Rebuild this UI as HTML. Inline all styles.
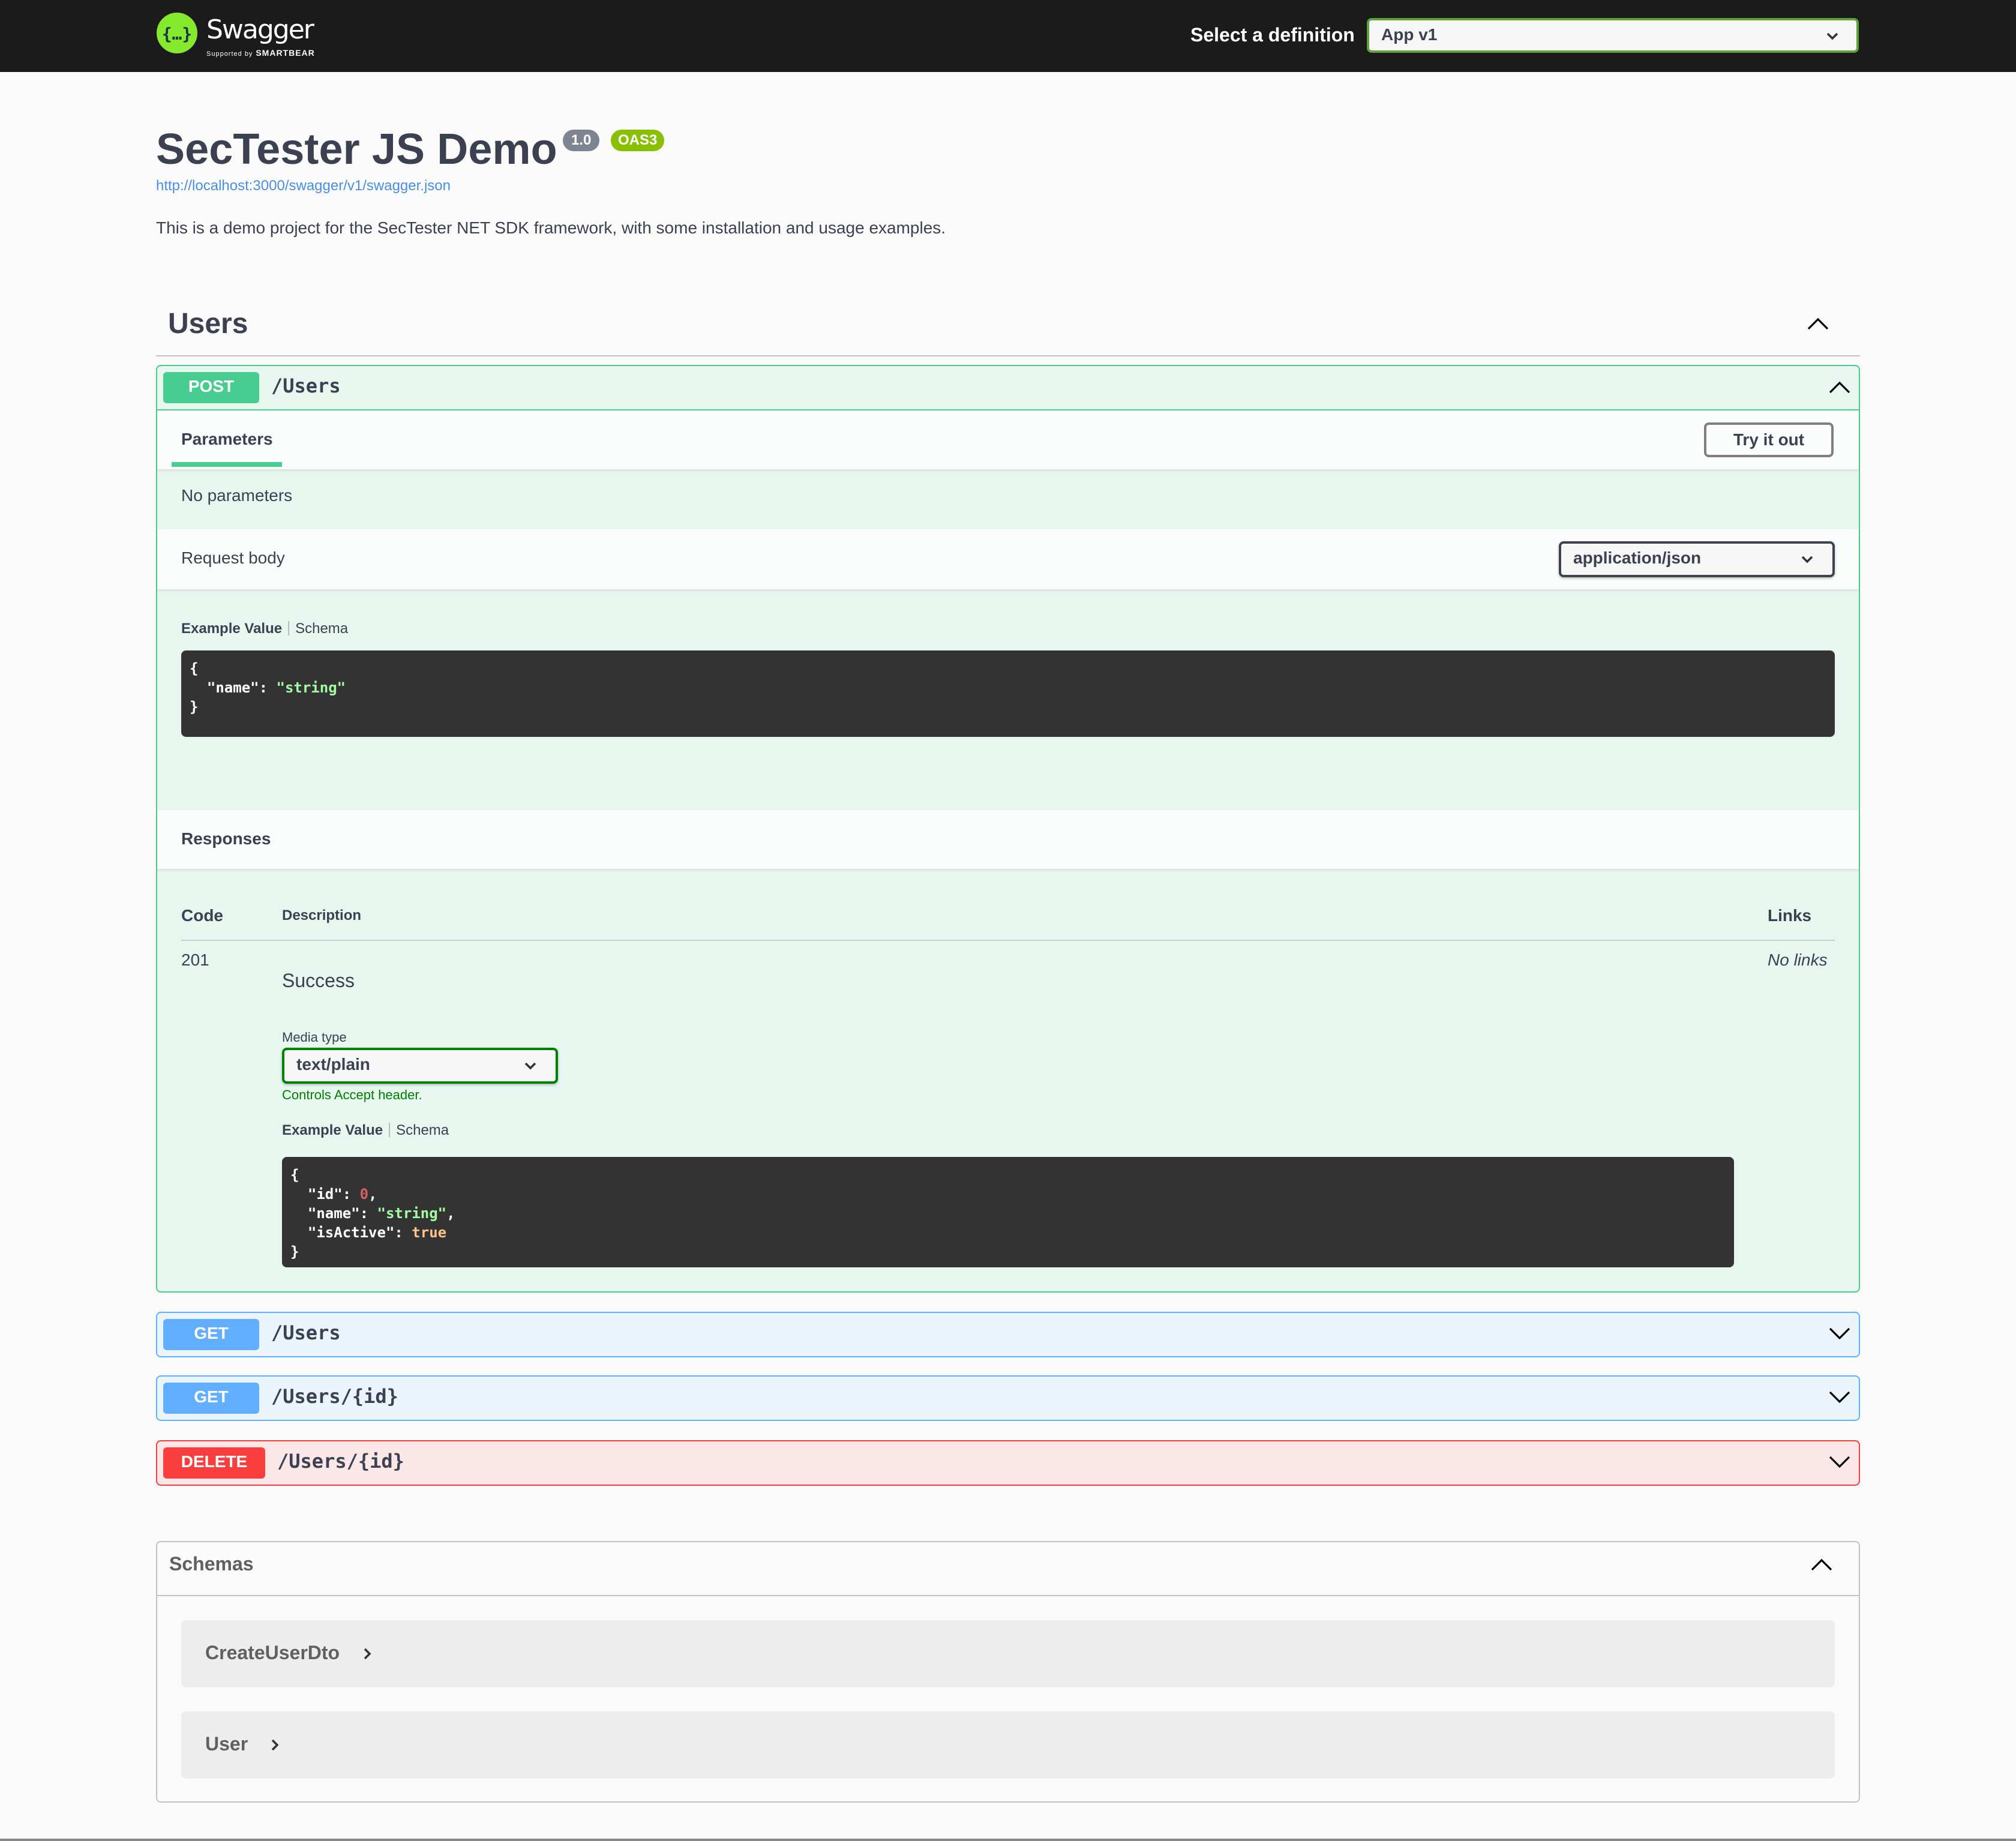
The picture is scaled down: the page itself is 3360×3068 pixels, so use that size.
<!DOCTYPE html>
<html><head><meta charset="utf-8">
<style>
html{zoom:2}
body{margin:0;width:1680px;height:1534px;background:#fafafa;font-family:"Liberation Sans",sans-serif;color:#3b4151;position:relative;overflow:hidden}
.a{position:absolute}
.mono{font-family:"DejaVu Sans Mono","Liberation Mono",monospace}
.opblock{position:absolute;left:130px;width:1418px;border:1px solid;border-radius:4px}
.badge{position:absolute;left:6px;top:5px;height:26px;border-radius:3px;color:#fff;font-weight:bold;font-size:14px;line-height:24px;text-align:center}
.path{position:absolute;top:8px;font-size:16px;font-weight:bold;color:#3b4151}
.code{position:absolute;background:#333;border-radius:4px;color:#fff;font-size:12px;line-height:16px;padding:7px 7px;box-sizing:border-box;font-weight:bold}
</style></head><body>
<div class="a" style="left:0;top:0;width:1680px;height:60px;background:#1b1b1b"></div>
<svg class="a" style="left:130px;top:10px" width="35" height="35" viewBox="0 0 35 35"><circle cx="17.5" cy="17.5" r="17" fill="#85ea2d"/><text x="17.5" y="23" text-anchor="middle" font-family="DejaVu Sans Mono" font-weight="bold" font-size="14" fill="#173647">{…}</text></svg>
<div class="a" style="left:172px;top:12px;color:#fff;font-size:22px;font-family:'DejaVu Sans',sans-serif;letter-spacing:-1px">Swagger</div>
<div class="a" style="left:172px;top:40px;color:#fff;font-size:7px;letter-spacing:.5px"><span style="font-size:5.5px">Supported by</span> <b>SMARTBEAR</b></div>
<div class="a" style="left:992px;top:20px;color:#fff;font-weight:bold;font-size:16px">Select a definition</div>
<div class="a" style="left:1139px;top:15px;width:410px;height:29px;box-sizing:border-box;border:2px solid #62a03f;border-radius:4px;background:#f7f7f7"></div>
<div class="a" style="left:1151px;top:21px;font-weight:bold;font-size:14px">App v1</div>
<svg class="a" style="left:1521px;top:24px" width="12" height="12" viewBox="0 0 12 12"><path d="M2 4l4 4 4-4" stroke="#333" stroke-width="1.8" fill="none"/></svg>

<div class="a" style="left:130px;top:104px;font-size:36px;font-weight:bold;letter-spacing:0.05px">SecTester JS Demo</div>
<div class="a" style="left:469px;top:108px;height:18px;padding:0 7px;line-height:18px;background:#7d8492;color:#fff;border-radius:57px;font-size:12px;font-weight:bold">1.0</div>
<div class="a" style="left:509px;top:108px;height:18px;padding:0 6px;line-height:18px;background:#89bf04;color:#fff;border-radius:57px;font-size:12px;font-weight:bold">OAS3</div>
<div class="a" style="left:130px;top:148px;font-size:12px;color:#4990e2">http://localhost:3000/swagger/v1/swagger.json</div>
<div class="a" style="left:130px;top:182px;font-size:14px">This is a demo project for the SecTester NET SDK framework, with some installation and usage examples.</div>

<div class="a" style="left:140px;top:256px;font-size:24px;font-weight:bold">Users</div>
<svg class="a" style="left:1505px;top:260px" width="20" height="20" viewBox="0 0 20 20"><path d="M2 14l8-8 8 8" stroke="#000" stroke-width="1.6" fill="none"/></svg>
<div class="a" style="left:130px;top:296px;width:1420px;height:1px;background:rgba(59,65,81,.3)"></div>

<div class="opblock" style="top:304px;height:771px;border-color:#49cc90;background:#e8f6f0"></div>
<div class="a" style="left:131px;top:341px;width:1418px;height:1px;background:#49cc90"></div>
<div class="badge" style="left:136px;top:310px;width:80px;background:#49cc90">POST</div>
<div class="path mono" style="left:226px;top:312px">/Users</div>
<svg class="a" style="left:1523px;top:313px" width="20" height="20" viewBox="0 0 20 20"><path d="M2 14l8-8 8 8" stroke="#000" stroke-width="1.6" fill="none"/></svg>
<div class="a" style="left:131px;top:342px;width:1418px;height:49px;background:rgba(255,255,255,.8);box-shadow:0 1px 2px rgba(0,0,0,.1)"></div>
<div class="a" style="left:151px;top:358px;font-size:14px;font-weight:bold">Parameters</div>
<div class="a" style="left:143px;top:385px;width:92px;height:4px;background:#49cc90"></div>
<div class="a" style="left:1420px;top:352px;width:108px;height:29px;box-sizing:border-box;border:2px solid gray;border-radius:4px;font-weight:bold;font-size:14px;text-align:center;line-height:25px">Try it out</div>
<div class="a" style="left:151px;top:405px;font-size:14px">No parameters</div>
<div class="a" style="left:131px;top:441px;width:1418px;height:50px;background:rgba(255,255,255,.8);box-shadow:0 1px 2px rgba(0,0,0,.1)"></div>
<div class="a" style="left:151px;top:457px;font-size:14px">Request body</div>
<div class="a" style="left:1299px;top:451px;width:230px;height:30px;box-sizing:border-box;border:2px solid #41444e;border-radius:4px;background:#f7f7f7;box-shadow:0 1px 2px rgba(0,0,0,.25)"></div>
<div class="a" style="left:1311px;top:457px;font-weight:bold;font-size:14px">application/json</div>
<svg class="a" style="left:1500px;top:460px" width="12" height="12" viewBox="0 0 12 12"><path d="M2 4l4 4 4-4" stroke="#333" stroke-width="1.8" fill="none"/></svg>
<div class="a" style="left:151px;top:517px;font-size:12px"><b>Example Value</b><span style="display:inline-block;width:1px;height:12px;background:#bbb;vertical-align:-2px;margin:0 5px"></span>Schema</div>
<div class="code mono" style="left:151px;top:542px;width:1378px;height:72px">{<br>&nbsp;&nbsp;"name": <span style="color:#a2fca2">"string"</span><br>}</div>
<div class="a" style="left:131px;top:675px;width:1418px;height:49px;background:rgba(255,255,255,.8);box-shadow:0 1px 2px rgba(0,0,0,.1)"></div>
<div class="a" style="left:151px;top:691px;font-size:14px;font-weight:bold">Responses</div>
<div class="a" style="left:151px;top:755px;font-size:14px;font-weight:bold">Code</div>
<div class="a" style="left:235px;top:756px;font-size:12px;font-weight:bold">Description</div>
<div class="a" style="left:1473px;top:755px;font-size:14px;font-weight:bold">Links</div>
<div class="a" style="left:151px;top:783px;width:1378px;height:1px;background:rgba(59,65,81,.2)"></div>
<div class="a" style="left:151px;top:792px;font-size:14px">201</div>
<div class="a" style="left:1473px;top:792px;font-size:14px;font-style:italic">No links</div>
<div class="a" style="left:235px;top:808px;font-size:16px">Success</div>
<div class="a" style="left:235px;top:858px;font-size:11px">Media type</div>
<div class="a" style="left:235px;top:873px;width:230px;height:30px;box-sizing:border-box;border:2px solid green;border-radius:4px;background:#f7f7f7;box-shadow:0 1px 2px rgba(0,0,0,.25)"></div>
<div class="a" style="left:247px;top:879px;font-weight:bold;font-size:14px">text/plain</div>
<svg class="a" style="left:436px;top:882px" width="12" height="12" viewBox="0 0 12 12"><path d="M2 4l4 4 4-4" stroke="#333" stroke-width="1.8" fill="none"/></svg>
<div class="a" style="left:235px;top:906px;font-size:11px;color:green">Controls Accept header.</div>
<div class="a" style="left:235px;top:935px;font-size:12px"><b>Example Value</b><span style="display:inline-block;width:1px;height:12px;background:#bbb;vertical-align:-2px;margin:0 5px"></span>Schema</div>
<div class="code mono" style="left:235px;top:964px;width:1210px;height:92px">{<br>&nbsp;&nbsp;"id": <span style="color:#d36363">0</span>,<br>&nbsp;&nbsp;"name": <span style="color:#a2fca2">"string"</span>,<br>&nbsp;&nbsp;"isActive": <span style="color:#fcc28c">true</span><br>}</div>

<div class="opblock" style="top:1093px;height:36px;border-color:#61affe;background:#ebf3fb"></div>
<div class="badge" style="left:136px;top:1099px;width:80px;background:#61affe">GET</div>
<div class="path mono" style="left:226px;top:1101px">/Users</div>
<svg class="a" style="left:1523px;top:1101px" width="20" height="20" viewBox="0 0 20 20"><path d="M2 6l8 8 8-8" stroke="#000" stroke-width="1.6" fill="none"/></svg>
<div class="opblock" style="top:1146px;height:36px;border-color:#61affe;background:#ebf3fb"></div>
<div class="badge" style="left:136px;top:1152px;width:80px;background:#61affe">GET</div>
<div class="path mono" style="left:226px;top:1154px">/Users/{id}</div>
<svg class="a" style="left:1523px;top:1154px" width="20" height="20" viewBox="0 0 20 20"><path d="M2 6l8 8 8-8" stroke="#000" stroke-width="1.6" fill="none"/></svg>
<div class="opblock" style="top:1200px;height:36px;border-color:#f93e3e;background:#fbe7e7"></div>
<div class="badge" style="left:136px;top:1206px;width:85px;background:#f93e3e">DELETE</div>
<div class="path mono" style="left:231px;top:1208px">/Users/{id}</div>
<svg class="a" style="left:1523px;top:1208px" width="20" height="20" viewBox="0 0 20 20"><path d="M2 6l8 8 8-8" stroke="#000" stroke-width="1.6" fill="none"/></svg>

<div class="a" style="left:130px;top:1284px;width:1420px;height:218px;box-sizing:border-box;border:1px solid rgba(59,65,81,.3);border-radius:4px"></div>
<div class="a" style="left:131px;top:1329px;width:1418px;height:1px;background:rgba(59,65,81,.3)"></div>
<div class="a" style="left:141px;top:1294px;font-size:16px;font-weight:bold;color:#606060">Schemas</div>
<svg class="a" style="left:1508px;top:1294px" width="20" height="20" viewBox="0 0 20 20"><path d="M2 14l8-8 8 8" stroke="#000" stroke-width="1.6" fill="none"/></svg>
<div class="a" style="left:151px;top:1350px;width:1378px;height:56px;background:rgba(0,0,0,.05);border-radius:4px"></div>
<div class="a" style="left:171px;top:1368px;font-size:16px;font-weight:bold;color:#606060">CreateUserDto</div>
<svg class="a" style="left:300px;top:1372px" width="12" height="12" viewBox="0 0 12 12"><path d="M4 2l4 4-4 4" stroke="#333" stroke-width="1.8" fill="none"/></svg>
<div class="a" style="left:151px;top:1426px;width:1378px;height:56px;background:rgba(0,0,0,.05);border-radius:4px"></div>
<div class="a" style="left:171px;top:1444px;font-size:16px;font-weight:bold;color:#606060">User</div>
<svg class="a" style="left:223px;top:1448px" width="12" height="12" viewBox="0 0 12 12"><path d="M4 2l4 4-4 4" stroke="#333" stroke-width="1.8" fill="none"/></svg>
<div class="a" style="left:0;top:1532px;width:1680px;height:2px;background:#888"></div>
</body></html>
